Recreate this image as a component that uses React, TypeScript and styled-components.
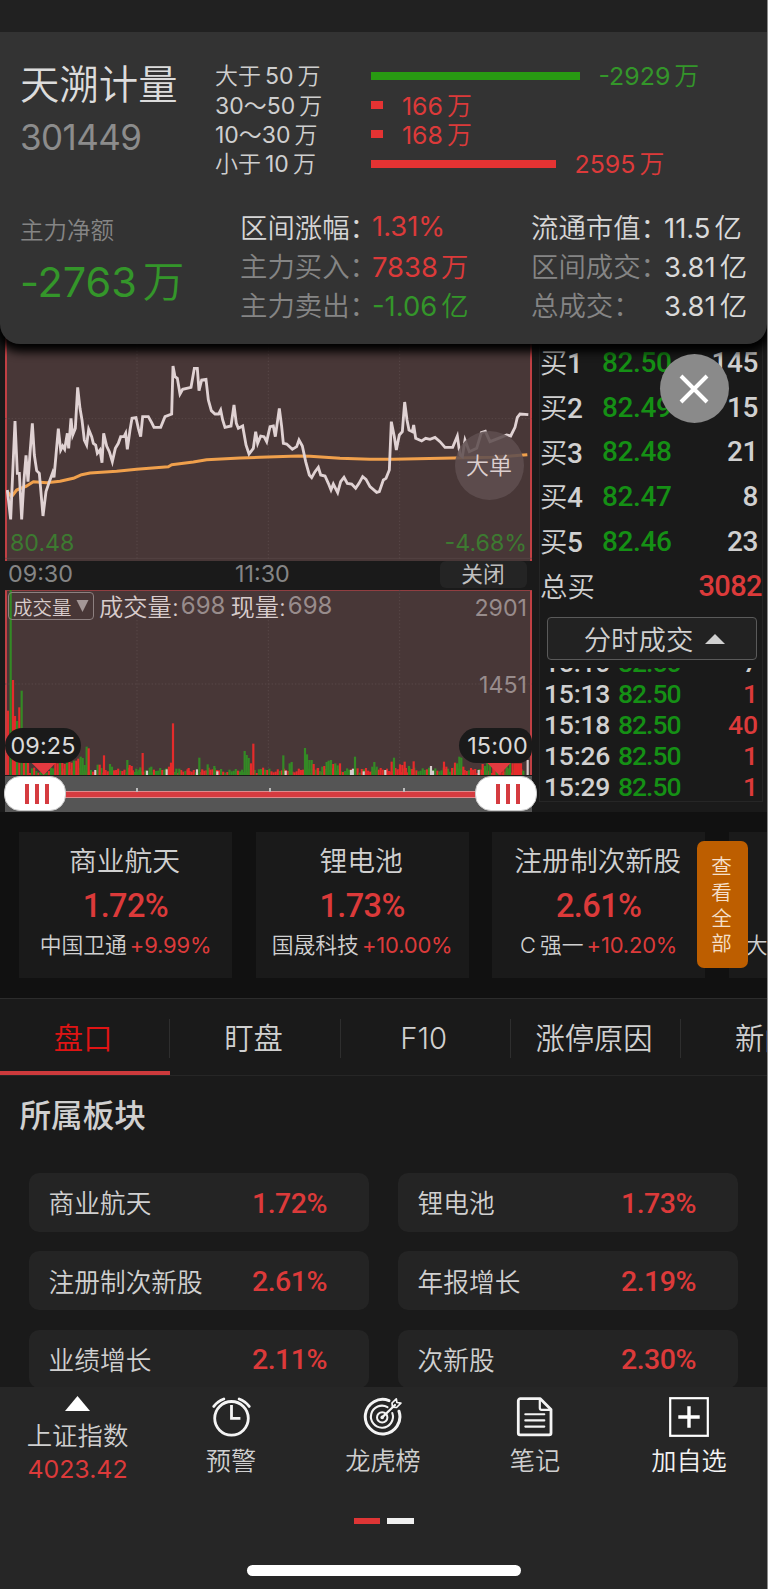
import React from "react";
import styled, { createGlobalStyle } from "styled-components";

const RED = "#dc3a3a";
const GREEN = "#34962a";
const sans = `Inter, "Noto Sans CJK SC", sans-serif`;
const din = `Roboto, "Noto Sans CJK SC", sans-serif`;

const Global = createGlobalStyle`
  * { box-sizing: border-box; }
  body { margin: 0; background: #1a1a1a; }
`;

const Page = styled.div`
  width: 768px;
  height: 1589px;
  overflow: hidden;
  display: flex;
  flex-direction: column;
  background: #1a1a1a;
  border-right: 1px solid #8c8c8c;
  font-family: ${sans};
  font-weight: 350;
  color: #d0d0d0;
  white-space: nowrap;
`;

const StatusBar = styled.div`
  position: relative;
  z-index: 4;
  flex: none;
  height: 32px;
  background: #212121;
`;

/* ---------- summary sheet ---------- */

const Sheet = styled.section`
  position: relative;
  z-index: 3;
  flex: none;
  height: 312px;
  margin-bottom: -20px;
  padding: 29px 0 0 20px;
  background: #333;
  border-radius: 0 0 20px 20px;
  box-shadow: 0 3px 10px 5px #000;
`;

const SheetTop = styled.div`
  display: flex;
  height: 145px;
`;

const Identity = styled.div`
  width: 195px;
  padding-top: 1px;
`;

const StockName = styled.h1`
  margin: 0;
  font-size: 39.4px;
  font-weight: 350;
  line-height: 46px;
  color: #dcdcdc;
`;

const StockCode = styled.div`
  margin-top: 4px;
  font-size: 35px;
  line-height: 50px;
  font-weight: 400;
  letter-spacing: -0.6px;
  color: #8c8c8c;
`;

const FlowList = styled.div``;

const FlowRow = styled.div`
  display: flex;
  align-items: center;
  height: 29.4px;
`;

const FlowLabel = styled.div`
  width: 156px;
  padding-bottom: 3px;
  font-size: 23px;
  color: #cfcfcf;
`;

const FlowBar = styled.div<{ $w: number; $c: string }>`
  width: ${(p) => p.$w}px;
  height: 8px;
  background: ${(p) => p.$c};
`;

const FlowValue = styled.div<{ $c: string }>`
  margin-left: 19px;
  padding-bottom: 3px;
  font-size: 24.9px;
  font-weight: 400;
  color: ${(p) => p.$c};
`;

const Unit = styled.span<{ $gap?: number }>`
  margin-left: ${(p) => p.$gap ?? 4}px;
  font-weight: 350;
`;

const Digits = styled.span<{ $gap: number }>`
  margin-left: ${(p) => p.$gap}px;
  font-weight: 400;
`;

const SheetBottom = styled.div`
  display: flex;
  height: 120px;
`;

const NetBlock = styled.div`
  width: 220px;
  padding-top: 10px;
`;

const NetLabel = styled.div`
  font-size: 23.5px;
  line-height: 30px;
  color: #858585;
`;

const NetValue = styled.div`
  margin-top: 11px;
  font-size: 41.5px;
  line-height: 50px;
  font-weight: 400;
  letter-spacing: -0.1px;
  color: ${GREEN};
`;

const FactColumn = styled.div<{ $w: number }>`
  width: ${(p) => p.$w}px;
`;

const Fact = styled.div`
  display: flex;
  height: 39px;
  align-items: center;
  font-size: 27.4px;
`;

const FactLabel = styled.span<{ $strong?: boolean; $w: number }>`
  width: ${(p) => p.$w}px;
  color: ${(p) => (p.$strong ? "#d6d6d6" : "#858585")};
`;

const FactValue = styled.span<{ $c?: string }>`
  font-size: 27.4px;
  font-weight: 400;
  color: ${(p) => p.$c ?? "#dadada"};
`;

/* ---------- quotes ---------- */

const Quotes = styled.section`
  position: relative;
  flex: none;
  display: flex;
  height: 488px;
  background: #1a1a1a;
`;

const ChartColumn = styled.div`
  width: 539px;
  padding-left: 5px;
`;

const ChartBox = styled.div<{ $h: number }>`
  position: relative;
  width: 527px;
  height: ${(p) => p.$h}px;
  background: #483737;
  border-left: 2px solid #c04044;
  border-right: 2px solid #c04044;
`;

const Plot = styled.svg`
  position: absolute;
  top: 0;
  left: -2px;
`;

const Corner = styled.div<{ $right?: boolean; $top: number; $c: string }>`
  position: absolute;
  top: ${(p) => p.$top}px;
  ${(p) => (p.$right ? "right: 3px" : "left: 3px")};
  font-size: 23.2px;
  line-height: 26px;
  font-weight: 400;
  color: ${(p) => p.$c};
`;

const BigOrders = styled.button`
  position: absolute;
  left: 447.5px;
  top: 107px;
  width: 69px;
  height: 69px;
  padding: 0 0 3px;
  border: 0;
  border-radius: 50%;
  background: rgba(94, 78, 80, 0.88);
  font: 350 23px ${sans};
  color: #dccfcf;
`;

const TimeAxis = styled.div`
  display: flex;
  align-items: flex-start;
  height: 29px;
  padding-left: 3px;
  font-size: 23.3px;
  line-height: 26px;
  font-weight: 400;
  color: #858585;
`;

const AxisTime = styled.span<{ $w: number }>`
  width: ${(p) => p.$w}px;
`;

const CloseLabel = styled.button`
  width: 87px;
  height: 27px;
  padding: 0;
  border: 0;
  border-radius: 6px;
  background: #242424;
  font: 400 21.7px/27px ${sans};
  color: #c0c0c0;
`;

const VolumeHead = styled.div`
  position: relative;
  display: flex;
  align-items: center;
  height: 30px;
  padding-left: 1px;
  font-size: 24.3px;
  color: #d8cccc;
`;

const Picker = styled.div`
  display: flex;
  align-items: center;
  justify-content: space-between;
  width: 86px;
  height: 28px;
  margin: 2px 5px 0 0;
  padding: 0 4px 0 4px;
  border: 1px solid #8d8080;
  border-radius: 4px;
  font-size: 19.5px;
`;

const Muted = styled.span`
  margin: 0 5px 0 2px;
  color: #988c8c;
  font-size: 24px;
  font-weight: 400;
`;

const TimeTag = styled.div<{ $right?: boolean }>`
  position: absolute;
  top: 138px;
  ${(p) => (p.$right ? "right: -2px" : "left: -2px")};
  width: ${(p) => (p.$right ? 73 : 76)}px;
  height: 35px;
  border-radius: ${(p) => (p.$right ? "18px 14px 14px 18px" : "18px")};
  background: #1a1a1a;
  font-size: 23.4px;
  line-height: 36px;
  font-weight: 400;
  text-align: center;
  color: #dadada;
  letter-spacing: 0.1px;
  ${(p) => p.$right && "padding-left: 4px;"}
`;

const Slider = styled.div`
  position: relative;
  width: 527px;
  height: 36px;
  margin-top: 1px;
  background: #555;
  display: flex;
  align-items: center;
`;

const Track = styled.div`
  width: 100%;
  height: 7px;
  background: #d53b40;
  border: solid #e08a8c;
  border-width: 1px 0;
`;

const Tick = styled.i<{ $x: number }>`
  position: absolute;
  left: ${(p) => p.$x}px;
  top: 12px;
  width: 2px;
  height: 4px;
  background: #bbb;
`;

const Handle = styled.div<{ $x: number }>`
  position: absolute;
  left: ${(p) => p.$x}px;
  top: 0;
  width: 62px;
  height: 35px;
  border: 1px solid #c9c9c9;
  border-radius: 16px;
  background: #fff;
  display: flex;
  align-items: center;
  justify-content: center;
  gap: 6px;
  padding-left: 3px;
`;

const Grip = styled.i`
  width: 4px;
  height: 20px;
  background: #d53b40;
`;

const Book = styled.div`
  width: 224px;
  height: 478px;
  padding-top: 15px;
  border: 1px solid #262626;
  font-family: ${din};
`;

const BookRow = styled.div`
  display: flex;
  align-items: center;
  height: 44.7px;
  padding: 0 4px 0 0;
  font-size: 28px;
  font-weight: 500;
  letter-spacing: -0.4px;
`;

const BookLabel = styled.span`
  width: 62px;
  padding-bottom: 2px;
  font-size: 28px;
  i { font-style: normal; font-weight: 350; font-size: 27.4px; }
`;

const BookPrice = styled.span`
  flex: 1;
  color: #159015;
`;

const BookTotal = styled(BookRow)`
  justify-content: space-between;
  padding-right: 0;
  font-size: 29px;
  letter-spacing: -0.6px;
  color: ${RED};
  span { padding-bottom: 2px; font-weight: 350; font-size: 27.4px; letter-spacing: 0; color: #d0d0d0; }
`;

const TradesButton = styled.button`
  display: flex;
  align-items: center;
  justify-content: center;
  gap: 12px;
  width: 210px;
  height: 43px;
  margin: 9px 0 8px 7px;
  padding: 0 0 2px 5px;
  border: 1px solid #5a5a5a;
  border-radius: 4px;
  background: #222;
  font: 350 27.4px ${sans};
  color: #d0d0d0;
  svg { margin-top: 2px; }
`;

const Trades = styled.div`
  height: 134.5px;
  overflow: hidden;
  display: flex;
  flex-direction: column;
  justify-content: flex-end;
`;

const Trade = styled.div`
  flex: none;
  display: flex;
  height: 31.2px;
  line-height: 31px;
  padding: 0 4px 0 4px;
  font-size: 26.5px;
  font-weight: 500;
`;

const TradeTime = styled.span`
  width: 74px;
  letter-spacing: -0.2px;
`;

const TradePrice = styled.span`
  flex: 1;
  color: #159015;
  letter-spacing: -1px;
`;

const TradeQty = styled.span<{ $c?: string }>`
  color: ${(p) => p.$c ?? "#d0d0d0"};
`;

const Dismiss = styled.button`
  position: absolute;
  left: 659.5px;
  top: 30px;
  width: 69px;
  height: 69px;
  padding: 0;
  border: 0;
  border-radius: 50%;
  background: #8a8a8a;
  z-index: 4;
  svg { display: block; margin: auto; }
`;

/* ---------- sector strip ---------- */

const Strip = styled.section`
  position: relative;
  flex: none;
  display: flex;
  gap: 23.6px;
  height: 186px;
  padding: 20px 0 0 19px;
  background: #111;
`;

const SectorCard = styled.div`
  flex: none;
  width: 213px;
  height: 146px;
  padding-top: 8px;
  background: #1a1a1a;
  text-align: center;
`;

const SectorName = styled.div`
  padding-right: 2px;
  font-size: 27.8px;
  line-height: 42px;
`;

const SectorPct = styled.div`
  margin-top: 1px;
  font: 500 32.5px/46px ${din};
  letter-spacing: -0.6px;
  color: ${RED};
`;

const SectorLeader = styled.div<{ $start?: boolean }>`
  font-size: 21.8px;
  line-height: 32px;
  ${(p) => p.$start && "padding-left: 17px; text-align: left;"}
  em {
    font-style: normal;
    margin-left: 3px;
    color: ${RED};
    font-size: 22px;
    font-weight: 400;
    letter-spacing: -0.2px;
  }
`;

const Latin = styled.span`
  margin-right: 4px;
`;

const ViewAll = styled.button`
  position: absolute;
  left: 697px;
  top: 29px;
  width: 51px;
  height: 127px;
  padding: 2px 16px 0 14px;
  border: 0;
  border-radius: 7px;
  background: #bd5e00;
  font: 350 20.5px/25.6px ${sans};
  color: #f6e0cc;
  white-space: normal;
`;

/* ---------- tabs ---------- */

const Tabs = styled.nav`
  flex: none;
  display: flex;
  height: 78px;
  border-top: 1px solid #2c2c2c;
  border-bottom: 1px solid #262626;
`;

const Tab = styled.div<{ $active?: boolean }>`
  position: relative;
  flex: none;
  width: 170.3px;
  padding: 20px 4px 0 0;
  font-size: 29.3px;
  line-height: 39px;
  text-align: center;
  color: ${(p) => (p.$active ? "#e01414" : "#d0d0d0")};
  box-shadow: ${(p) => (p.$active ? "inset 0 -4px #cc3a3c" : "none")};
  &::after {
    content: "";
    position: absolute;
    right: 0;
    top: 20px;
    width: 1px;
    height: 39px;
    background: #2e2e2e;
  }
`;

/* ---------- sector grid ---------- */

const Sectors = styled.section`
  flex: none;
  height: 311px;
  overflow: hidden;
`;

const SectionTitle = styled.h2`
  margin: 0;
  padding: 17px 0 0 19.5px;
  font-size: 31.6px;
  line-height: 46px;
  font-weight: 500;
`;

const SectorGrid = styled.div`
  display: grid;
  grid-template-columns: 340px 340px;
  grid-auto-rows: 58.5px;
  gap: 19.8px 29px;
  padding: 34px 0 0 29px;
`;

const SectorCell = styled.div`
  display: flex;
  align-items: center;
  justify-content: space-between;
  padding: 0 42px 1px 19.6px;
  border-radius: 10px;
  background: #242424;
  font-size: 25.7px;
`;

const CellPct = styled.span`
  font: 500 28.5px ${din};
  padding-top: 3px;
  letter-spacing: -0.5px;
  color: ${RED};
`;

/* ---------- bottom bar ---------- */

const BottomBar = styled.footer`
  flex: none;
  height: 203px;
  background: #262626;
  display: flex;
  flex-direction: column;
  align-items: center;
`;

const Actions = styled.div`
  width: 767px;
  height: 131px;
  display: grid;
  grid-template-columns: 155px 152px 152px 152px 156px;
`;

const Action = styled.div<{ $bright?: boolean }>`
  display: flex;
  flex-direction: column;
  align-items: center;
  padding-top: 10px;
  font-size: 25.2px;
  line-height: 30px;
  color: ${(p) => (p.$bright ? "#f2f2f2" : "#cfcfcf")};
  svg { margin-bottom: 8.5px; }
`;

const IndexAction = styled(Action)`
  padding-top: 9px;
  font-size: 25.4px;
  svg { margin: 0 0 10px; }
`;

const IndexValue = styled.div`
  margin-top: 2.5px;
  font-size: 24.9px;
  font-weight: 400;
  color: ${RED};
`;

const Pager = styled.div`
  display: flex;
  gap: 7px;
`;

const PageDot = styled.i<{ $on?: boolean }>`
  width: 26.5px;
  height: 6px;
  background: ${(p) => (p.$on ? "#de3535" : "#f0f0f0")};
`;

const HomeIndicator = styled.div`
  width: 274px;
  height: 11px;
  margin-top: 41px;
  border-radius: 6px;
  background: #fff;
`;

/* ---------- data ---------- */

const flows = [
  { a: "大于", n: "50", w: 208.5, v: "-2929", c: GREEN },
  { a: "", n: "30～50", w: 12, v: "166", c: RED },
  { a: "", n: "10～30", w: 12, v: "168", c: RED },
  { a: "小于", n: "10", w: 184.5, v: "2595", c: RED },
];

const bids = [
  ["1", "82.50", "145"],
  ["2", "82.49", "15"],
  ["3", "82.48", "21"],
  ["4", "82.47", "8"],
  ["5", "82.46", "23"],
];

const trades: [string, string, string, string?][] = [
  ["15:10", "82.50", "7"],
  ["15:13", "82.50", "1", RED],
  ["15:18", "82.50", "40", RED],
  ["15:26", "82.50", "1", RED],
  ["15:29", "82.50", "1", RED],
];

const strip = [
  { name: "商业航天", pct: "1.72%", leader: "中国卫通", gain: "+9.99%" },
  { name: "锂电池", pct: "1.73%", leader: "国晟科技", gain: "+10.00%" },
  { name: "注册制次新股", pct: "2.61%", latin: "C", leader: "强一", gain: "+10.20%" },
];

const sectors = [
  ["商业航天", "1.72%"],
  ["锂电池", "1.73%"],
  ["注册制次新股", "2.61%"],
  ["年报增长", "2.19%"],
  ["业绩增长", "2.11%"],
  ["次新股", "2.30%"],
];

type Pt = [number, number];

/* Plot units are thirds of a pixel; the second half of the day starts at x = 780. */
const AFTERNOON = 780;
const join = (am: Pt[], pm: Pt[]) =>
  [...am, ...pm.map(([x, y]): Pt => [x + AFTERNOON, y])].map((p) => p.join(",")).join(" ");

const price = join(
  [
    [22, 450], [32, 538], [45, 243], [52, 400], [58, 400], [65, 538], [72, 420], [78, 346], [84, 425], [90, 340],
    [97, 250], [103, 345], [110, 392], [118, 400], [129, 528], [138, 455], [148, 425], [158, 398], [162, 412],
    [168, 345], [175, 266], [182, 330], [188, 318], [194, 328], [202, 280], [206, 325], [213, 235], [218, 285],
    [226, 265], [233, 142], [240, 205], [246, 240], [253, 300], [260, 315], [266, 268], [275, 290], [280, 310],
    [287, 315], [292, 340], [300, 330], [306, 368], [311, 280], [320, 318], [328, 335], [337, 365], [346, 325],
    [355, 310], [362, 290], [372, 290], [377, 280], [382, 328], [390, 270], [396, 235], [408, 233], [415, 265],
    [422, 290], [428, 230], [445, 230], [455, 248], [462, 262], [482, 262], [495, 230], [515, 222], [519, 78],
    [525, 110], [532, 115], [540, 162], [548, 148], [573, 142], [583, 85], [592, 85], [597, 152], [605, 120],
    [618, 118], [625, 180], [634, 212], [645, 222], [656, 222], [662, 210], [668, 240], [675, 262], [693, 258],
    [702, 195], [709, 250], [715, 265], [728, 258], [738, 315], [747, 342], [760, 325], [767, 275], [773, 310],
  ],
  [
    [2, 288], [12, 290], [20, 305], [30, 260], [40, 258], [46, 290], [58, 205], [65, 260], [70, 310], [80, 312],
    [97, 328], [110, 320], [117, 300], [127, 318], [137, 365], [148, 405], [155, 413], [165, 395], [175, 382],
    [182, 405], [195, 408], [205, 430], [213, 450], [220, 432], [233, 458], [242, 425], [252, 412], [262, 430],
    [275, 432], [287, 445], [297, 430], [308, 410], [318, 418], [330, 440], [350, 457], [358, 455], [370, 420],
    [378, 415], [388, 390], [394, 245], [403, 290], [409, 330], [418, 285], [427, 275], [434, 186], [441, 240],
    [447, 270], [457, 275], [461, 255], [467, 295], [485, 303], [497, 295], [510, 298], [525, 292], [540, 305],
    [555, 322], [578, 322], [592, 288], [600, 345], [607, 350], [615, 300], [628, 335], [650, 325], [664, 278],
    [676, 274], [690, 305], [715, 295], [740, 285], [752, 288], [765, 262], [772, 232], [780, 222], [805, 224],
  ]
);

const average = join(
  [
    [22, 455], [35, 470], [50, 450], [80, 438], [100, 425], [140, 428], [180, 424], [220, 415], [245, 404],
    [270, 399], [350, 394], [410, 388], [505, 380], [515, 374], [580, 366], [620, 359], [720, 354],
  ],
  [[0, 352], [115, 348], [150, 349], [240, 355], [330, 358], [400, 358], [580, 354], [700, 352], [780, 346], [802, 344]]
);

const spikes: [number, number, string][] = [
  [24, 422, "r"], [32, 38, "g"], [39, 330, "r"], [45, 438, "r"], [51, 453, "g"], [58, 412, "r"], [65, 362, "g"],
  [72, 500, "r"], [78, 520, "g"], [84, 540, "r"], [166, 572, "r"], [173, 580, "r"], [180, 565, "g"], [187, 575, "r"],
  [194, 582, "r"], [201, 572, "g"], [208, 565, "r"], [215, 578, "r"], [222, 572, "g"], [229, 572, "r"],
  [235, 566, "r"], [242, 560, "g"], [248, 564, "g"], [254, 585, "g"], [260, 530, "g"], [266, 535, "r"],
  [286, 600, "w"], [293, 584, "g"], [299, 584, "r"], [312, 556, "r"], [330, 582, "g"], [336, 590, "g"],
  [382, 570, "g"], [389, 585, "r"], [395, 588, "r"], [409, 596, "g"], [421, 592, "g"], [428, 549, "r"],
  [441, 602, "w"], [454, 590, "g"], [500, 598, "w"], [507, 590, "r"], [513, 578, "r"], [519, 460, "r"],
  [529, 596, "g"], [538, 596, "g"], [566, 594, "r"], [591, 598, "w"], [598, 563, "g"], [623, 583, "g"],
  [643, 588, "g"], [652, 604, "w"], [734, 543, "g"], [740, 555, "g"], [746, 564, "g"], [753, 580, "r"],
  [760, 521, "r"], [850, 556, "g"], [857, 602, "w"], [869, 580, "g"], [875, 576, "g"], [915, 534, "g"],
  [921, 553, "g"], [928, 570, "g"], [935, 570, "g"], [941, 582, "r"], [954, 594, "r"], [967, 590, "g"],
  [973, 588, "r"], [980, 576, "g"], [986, 572, "g"], [993, 570, "g"], [1000, 582, "r"], [1006, 580, "g"],
  [1013, 586, "g"], [1020, 580, "r"], [1053, 600, "w"], [1059, 596, "w"], [1065, 560, "g"], [1091, 604, "w"],
  [1117, 590, "g"], [1123, 576, "g"], [1130, 590, "g"], [1156, 600, "w"], [1175, 575, "r"], [1182, 563, "g"],
  [1200, 583, "r"], [1207, 585, "r"], [1214, 575, "r"], [1227, 588, "g"], [1241, 574, "r"], [1293, 588, "w"],
  [1299, 602, "w"], [1332, 575, "r"], [1339, 590, "r"], [1365, 578, "r"], [1371, 580, "g"], [1378, 560, "g"],
  [1384, 563, "g"], [1390, 590, "r"], [1436, 600, "w"], [1448, 582, "r"], [1455, 588, "g"], [1462, 578, "g"],
  [1470, 570, "g"], [1480, 575, "r"], [1490, 580, "g"], [1500, 570, "r"], [1510, 580, "r"], [1520, 570, "g"],
  [1530, 575, "g"], [1538, 580, "r"], [1545, 580, "r"], [1551, 580, "r"], [1557, 580, "r"], [1563, 580, "r"],
  [1570, 602, "g"], [1583, 570, "w"],
];

const tint: Record<string, string> = { r: "#e52b2b", g: "#338a25", w: "#d8cccc" };

/* Quiet minutes between the listed spikes. */
const quiet = Array.from({ length: 236 }, (_, i) => {
  const x = 90 + i * 6.3;
  const k = (i * 37 + ((i * i) % 23) * 11) % 17;
  return { x, y: 609 - k, c: tint[(i * 7 + ((i * i) % 5)) % 9 < 5 ? "r" : "g"] };
}).filter((b) => b.x < 1570);

/* ---------- icons ---------- */

const Clock = () => (
  <svg width="40" height="40" viewBox="0 0 40 40" fill="none" stroke="#f4f4f4" strokeWidth="2.8" strokeLinecap="round">
    <circle cx="20.5" cy="21.3" r="16.8" />
    <path d="M20.5 9.5V21.3h7.5" strokeLinecap="square" />
    <path d="M2.8 9.4Q7 4 12.8 2M38.2 9.4Q34 4 28.2 2" />
  </svg>
);

const Target = () => (
  <svg width="40" height="40" viewBox="0 0 40 40" fill="none" stroke="#f4f4f4" strokeLinecap="round">
    <path d="M26 3.6A17.3 17.3 0 1 0 36 14.2" strokeWidth="3" />
    <path d="M24.5 10.2A11 11 0 1 0 29.3 16" strokeWidth="2.1" />
    <circle cx="19.2" cy="20.4" r="5.2" strokeWidth="2" />
    <path d="M19.2 20.4 32 8" strokeWidth="2.2" />
    <path d="M29.5 10.2 29 6l4.3-4.2.6 3.7 4 .7-4.3 4.3z" strokeWidth="1.7" strokeLinejoin="round" />
    <circle cx="19.2" cy="20.4" r="1.8" fill="#f4f4f4" stroke="none" />
  </svg>
);

const Note = () => (
  <svg width="40" height="40" viewBox="0 0 40 40" fill="none" stroke="#f4f4f4" strokeWidth="2.8" strokeLinejoin="round">
    <path d="M5.5 1.7h19.8L36 12.6V36a1.8 1.8 0 0 1-1.8 1.8H5.1A1.8 1.8 0 0 1 3.3 36V3.7a2 2 0 0 1 2.2-2z" />
    <path d="M24.8 2.5V11q0 1.8 1.8 1.8H35.5" strokeWidth="2.2" />
    <path d="M10.3 17.2h19M10.3 23.4h19M10.3 29.6h19" strokeWidth="2.1" strokeLinecap="round" />
  </svg>
);

const AddBox = () => (
  <svg width="40" height="40" viewBox="0 0 40 40" fill="none" stroke="#fff">
    <rect x="1.2" y="1.2" width="37.6" height="37.6" strokeWidth="2.2" />
    <path d="M20 9.3v21.4M9.3 20h21.4" strokeWidth="3.4" />
  </svg>
);

const Up = ({ w, h, c }: { w: number; h: number; c: string }) => (
  <svg width={w} height={h} viewBox="0 0 20 10" preserveAspectRatio="none">
    <path d="M0 10 10 0l10 10z" fill={c} />
  </svg>
);

const Grips = () => (
  <>
    <Grip />
    <Grip />
    <Grip />
  </>
);

export default function App() {
  return (
    <>
      <Global />
      <Page>
        <StatusBar />

        <Sheet>
          <SheetTop>
            <Identity>
              <StockName>天溯计量</StockName>
              <StockCode>301449</StockCode>
            </Identity>
            <FlowList>
              {flows.map((f) => (
                <FlowRow key={f.n}>
                  <FlowLabel>
                    {f.a}
                    <Digits $gap={f.a ? 4 : 0}>{f.n}</Digits>
                    <Unit>万</Unit>
                  </FlowLabel>
                  <FlowBar $w={f.w} $c={f.c === GREEN ? "#289a12" : "#e43333"} />
                  <FlowValue $c={f.c}>
                    {f.v}
                    <Unit>万</Unit>
                  </FlowValue>
                </FlowRow>
              ))}
            </FlowList>
          </SheetTop>
          <SheetBottom>
            <NetBlock>
              <NetLabel>主力净额</NetLabel>
              <NetValue>
                -2763<Unit $gap={6}>万</Unit>
              </NetValue>
            </NetBlock>
            <FactColumn $w={291}>
              <Fact>
                <FactLabel $w={132} $strong>区间涨幅：</FactLabel>
                <FactValue $c={RED}>1.31%</FactValue>
              </Fact>
              <Fact>
                <FactLabel $w={132}>主力买入：</FactLabel>
                <FactValue $c={RED}>7838<Unit $gap={3}>万</Unit></FactValue>
              </Fact>
              <Fact>
                <FactLabel $w={132}>主力卖出：</FactLabel>
                <FactValue $c={GREEN}>-1.06<Unit>亿</Unit></FactValue>
              </Fact>
            </FactColumn>
            <FactColumn $w={230}>
              <Fact>
                <FactLabel $w={133} $strong>流通市值：</FactLabel>
                <FactValue>11.5<Unit>亿</Unit></FactValue>
              </Fact>
              <Fact>
                <FactLabel $w={133}>区间成交：</FactLabel>
                <FactValue>3.81<Unit>亿</Unit></FactValue>
              </Fact>
              <Fact>
                <FactLabel $w={133}>总成交：</FactLabel>
                <FactValue>3.81<Unit>亿</Unit></FactValue>
              </Fact>
            </FactColumn>
          </SheetBottom>
        </Sheet>

        <Quotes>
          <ChartColumn>
            <ChartBox $h={237}>
              <Plot width="527" height="237" viewBox="15 -48 1581 711" fill="none">
                <g stroke="#5b4a4a" strokeWidth="2.6" strokeDasharray="4 6">
                  <path d="M411 -48V660M805 -48V660M1199 -48V660M15 236H1596" />
                </g>
                <path d="M15 655H1596" stroke="#5b4a4a" strokeWidth="2" />
                <polyline points={average} stroke="#f0a04c" strokeWidth="9" strokeLinejoin="round" />
                <polyline points={price} stroke="#e0d2d3" strokeWidth="8.5" strokeLinejoin="miter" strokeMiterlimit="5" />
              </Plot>
              <Corner $top={206} $c="#3d7a31">80.48</Corner>
              <Corner $top={206} $c="#3d7a31" $right>-4.68%</Corner>
              <BigOrders>大单</BigOrders>
            </ChartBox>
            <TimeAxis>
              <AxisTime $w={227}>09:30</AxisTime>
              <AxisTime $w={204.5}>11:30</AxisTime>
              <CloseLabel>关闭</CloseLabel>
            </TimeAxis>
            <ChartBox $h={185}>
              <Plot width="527" height="185" viewBox="15 60 1581 555" fill="none">
                <path d="M15 61H1596" stroke="#a04044" strokeWidth="3" />
                <g stroke="#5b4a4a" strokeWidth="2.6" strokeDasharray="4 6">
                  <path d="M411 60V615M805 60V615M1199 60V615M15 342H1596" />
                </g>
                {quiet.map((b, i) => (
                  <path key={i} d={`M${b.x} ${b.y}V615`} stroke={b.c} strokeWidth="6.4" />
                ))}
                {spikes.map(([x, y, c]) => (
                  <path key={x} d={`M${x} ${y}V615`} stroke={tint[c]} strokeWidth="6.6" />
                ))}
                <path d="M92 576h78l-39 39zM1459 576h76l-38 39z" fill="#e23a40" />
              </Plot>
              <VolumeHead>
                <Picker>
                  成交量
                  <svg width="13" height="12" viewBox="0 0 12 12"><path d="M0 0h12L6 12z" fill="#a39797" /></svg>
                </Picker>
                成交量:<Muted>698</Muted>现量:<Muted>698</Muted>
              </VolumeHead>
              <Corner $top={5} $c="#988c8c" $right>2901</Corner>
              <Corner $top={82} $c="#988c8c" $right>1451</Corner>
              <TimeTag>09:25</TimeTag>
              <TimeTag $right>15:00</TimeTag>
            </ChartBox>
            <Slider>
              <Track />
              <Tick $x={131} />
              <Tick $x={264} />
              <Tick $x={398} />
              <Handle $x={-1}><Grips /></Handle>
              <Handle $x={470}><Grips /></Handle>
            </Slider>
          </ChartColumn>

          <Book>
            {bids.map(([n, p, q]) => (
              <BookRow key={n}>
                <BookLabel><i>买</i>{n}</BookLabel>
                <BookPrice>{p}</BookPrice>
                {q}
              </BookRow>
            ))}
            <BookTotal>
              <span>总买</span>3082
            </BookTotal>
            <TradesButton>
              分时成交 <Up w={20} h={10} c="#d0d0d0" />
            </TradesButton>
            <Trades>
              {trades.map(([t, p, q, c]) => (
                <Trade key={t}>
                  <TradeTime>{t}</TradeTime>
                  <TradePrice>{p}</TradePrice>
                  <TradeQty $c={c}>{q}</TradeQty>
                </Trade>
              ))}
            </Trades>
          </Book>

          <Dismiss aria-label="close">
            <svg width="30" height="30" viewBox="0 0 30 30" stroke="#fff" strokeWidth="4">
              <path d="M2 2l26 26M28 2 2 28" />
            </svg>
          </Dismiss>
        </Quotes>

        <Strip>
          {strip.map((s) => (
            <SectorCard key={s.name}>
              <SectorName>{s.name}</SectorName>
              <SectorPct>{s.pct}</SectorPct>
              <SectorLeader>
                {s.latin && <Latin>{s.latin}</Latin>}
                {s.leader}
                <em>{s.gain}</em>
              </SectorLeader>
            </SectorCard>
          ))}
          <SectorCard>
            <SectorName>&nbsp;</SectorName>
            <SectorPct>&nbsp;</SectorPct>
            <SectorLeader $start>大</SectorLeader>
          </SectorCard>
          <ViewAll>查看全部</ViewAll>
        </Strip>

        <Tabs>
          <Tab $active>盘口</Tab>
          <Tab>盯盘</Tab>
          <Tab>F10</Tab>
          <Tab>涨停原因</Tab>
          <Tab>新闻</Tab>
        </Tabs>

        <Sectors>
          <SectionTitle>所属板块</SectionTitle>
          <SectorGrid>
            {sectors.map(([name, pct]) => (
              <SectorCell key={name}>
                {name}
                <CellPct>{pct}</CellPct>
              </SectorCell>
            ))}
          </SectorGrid>
        </Sectors>

        <BottomBar>
          <Actions>
            <IndexAction>
              <Up w={25} h={15} c="#fff" />
              上证指数
              <IndexValue>4023.42</IndexValue>
            </IndexAction>
            <Action><Clock />预警</Action>
            <Action><Target />龙虎榜</Action>
            <Action><Note />笔记</Action>
            <Action $bright><AddBox />加自选</Action>
          </Actions>
          <Pager>
            <PageDot $on />
            <PageDot />
          </Pager>
          <HomeIndicator />
        </BottomBar>
      </Page>
    </>
  );
}
